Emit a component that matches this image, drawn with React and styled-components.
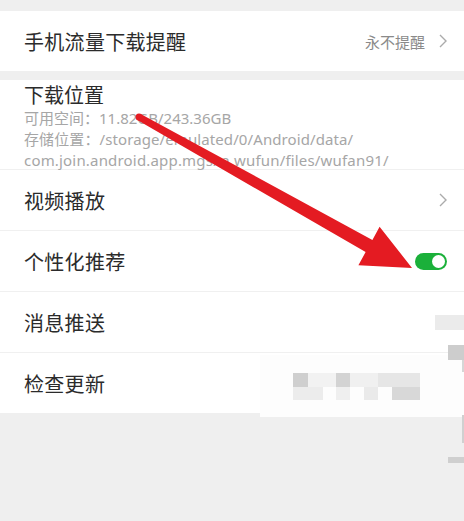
import React from "react";
import styled, { createGlobalStyle } from "styled-components";

const Global = createGlobalStyle`
  html, body {
    margin: 0;
    padding: 0;
    background: #efefef;
  }
  body {
    font-family: "Noto Sans", "Noto Sans CJK SC", sans-serif;
  }
`;

const Page = styled.div`
  position: relative;
  width: 464px;
  height: 521px;
  overflow: hidden;
  background: #efefef;
  padding-top: 11px;
  box-sizing: border-box;
`;

const Group = styled.div`
  background: #fff;
  margin-bottom: ${(p) => p.$gap || 0}px;
`;

const Row = styled.div`
  display: flex;
  align-items: center;
  height: ${(p) => p.$h || 61}px;
  padding: 0 17px 0 24px;
  border-bottom: ${(p) => (p.$last ? "none" : "1px solid #f0f0f0")};
  box-sizing: border-box;
`;

const Label = styled.div`
  flex: 1;
  font-size: 20px;
  color: #2b2b2b;
  font-family: "Noto Sans CJK SC", sans-serif;
  letter-spacing: 0.3px;
`;

const Value = styled.span`
  font-size: 15px;
  color: #8a8a8a;
  font-family: "Noto Sans CJK SC", sans-serif;
  margin-right: 14px;
`;

const Block = styled.div`
  padding: 2px 24px 0;
  height: 90px;
  box-sizing: border-box;
  border-bottom: 1px solid #f0f0f0;
`;

const BlockTitle = styled.div`
  font-size: 20px;
  line-height: 26px;
  color: #2b2b2b;
  font-family: "Noto Sans CJK SC", sans-serif;
`;

const SubLine = styled.div`
  font-size: 15px;
  line-height: 21px;
  color: #a6a6a6;
  white-space: nowrap;
  letter-spacing: ${(p) => p.$ls || 0}px;
`;

const Toggle = styled.div`
  width: 32px;
  height: 17px;
  border-radius: 9px;
  background: #1bb03a;
  display: flex;
  align-items: center;
  justify-content: flex-end;
  padding: 0 2px;
  box-sizing: border-box;
`;

const Knob = styled.div`
  width: 13px;
  height: 13px;
  border-radius: 50%;
  background: #fff;
`;

const Overlay = styled.svg`
  position: absolute;
  left: 0;
  top: 0;
  pointer-events: none;
`;

const Tile = styled.div`
  position: absolute;
  left: ${(p) => p.$x}px;
  top: ${(p) => p.$y}px;
  width: ${(p) => p.$w}px;
  height: ${(p) => p.$h}px;
  background: ${(p) => p.$c};
`;

const Chevron = () => (
  <svg width="8" height="14" viewBox="0 0 8 14">
    <polyline points="1,1 7,7 1,13" fill="none" stroke="#ababab" strokeWidth="1.4" />
  </svg>
);

const tiles = [
  [260, 355, 204, 62, "#fdfdfd"],
  [293, 373, 15, 14, "#cfcfcf"],
  [308, 373, 28, 14, "#f2f2f2"],
  [336, 373, 14, 14, "#d3d3d3"],
  [350, 373, 28, 14, "#f0f0f0"],
  [378, 373, 42, 14, "#e6e6e6"],
  [293, 387, 30, 13, "#ececec"],
  [336, 387, 14, 13, "#efefef"],
  [364, 387, 14, 13, "#eaeaea"],
  [392, 387, 28, 13, "#d8d8d8"],
  [435, 315, 29, 15, "#ebebeb"],
  [448, 345, 16, 15, "#cdcdcd"],
  [462, 360, 2, 12, "#d6d6d6"],
  [462, 415, 2, 28, "#d0d0d0"],
  [448, 457, 16, 6, "#cfcfcf"],
];

const App = () => {
  return (
    <Page>
      <Global />
      <Group $gap={9}>
        <Row $h={60} $last>
          <Label>手机流量下载提醒</Label>
          <Value>永不提醒</Value>
          <Chevron />
        </Row>
      </Group>
      <Group>
        <Block>
          <BlockTitle>下载位置</BlockTitle>
          <SubLine>可用空间：11.82GB/243.36GB</SubLine>
          <SubLine $ls={0.1}>存储位置：/storage/emulated/0/Android/data/</SubLine>
          <SubLine $ls={0.18}>com.join.android.app.mgsxa.wufun/files/wufan91/</SubLine>
        </Block>
        <Row>
          <Label>视频播放</Label>
          <Chevron />
        </Row>
        <Row>
          <Label>个性化推荐</Label>
          <Toggle>
            <Knob />
          </Toggle>
        </Row>
        <Row>
          <Label>消息推送</Label>
        </Row>
        <Row $h={60} $last>
          <Label>检查更新</Label>
        </Row>
      </Group>
      {tiles.map(([x, y, w, h, c], i) => (
        <Tile key={i} $x={x} $y={y} $w={w} $h={h} $c={c} />
      ))}
      <Overlay width="464" height="521" viewBox="0 0 464 521">
        <polygon
          points="140.7,113.9 372.4,239.9 379.6,226.7 412,268 358.4,265.3 365.6,252.1 137.3,120.1"
          fill="#e41b22"
        />
        <circle cx="139" cy="117" r="3.5" fill="#e41b22" />
      </Overlay>
    </Page>
  );
};

export default App;
